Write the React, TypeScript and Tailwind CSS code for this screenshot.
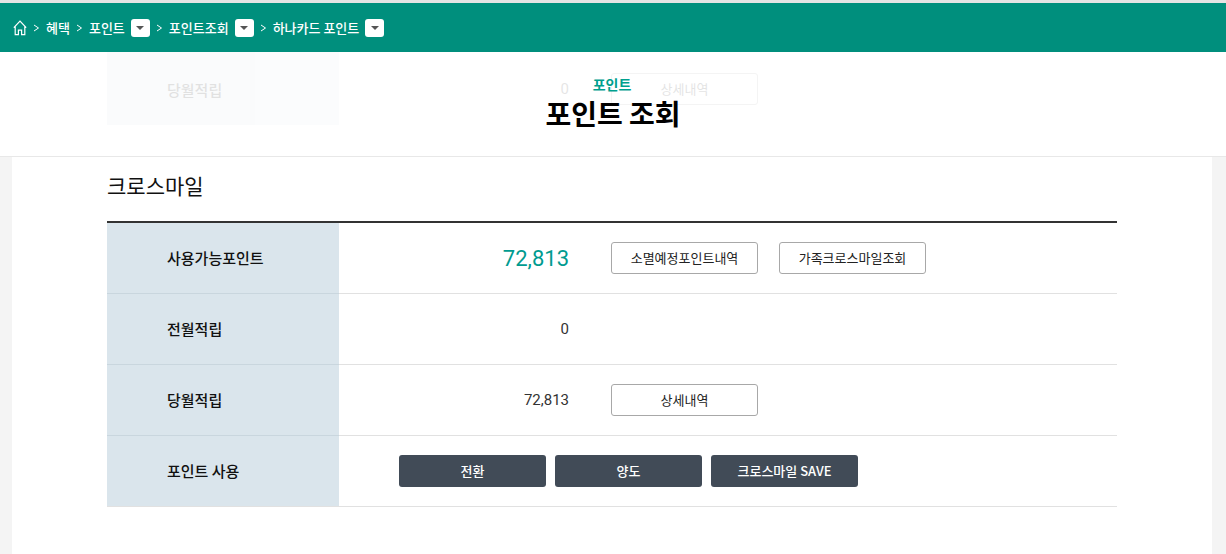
import { Fragment, ReactNode } from "react";

const FONT = "font-['Noto_Sans_CJK_KR','Noto_Sans',sans-serif]";
const NUM = "font-['Roboto','Noto_Sans_CJK_KR',sans-serif]";

const crumbs = [
  { label: "혜택", select: false },
  { label: "포인트", select: true },
  { label: "포인트조회", select: true },
  { label: "하나카드 포인트", select: true },
];

function HomeIcon() {
  return (
    <svg width="14" height="16" viewBox="0 0 14 16" fill="none" stroke="white" strokeWidth="1.2">
      <path d="M0.8 7.6 7 1.2l6.2 6.4M2.2 6.6v8h3.2v-4.4h3.2v4.4h3.2v-8" />
    </svg>
  );
}

function Chevron() {
  return (
    <svg width="7" height="8" viewBox="0 0 7 8" fill="none" stroke="white" strokeWidth="1">
      <path d="M1 1l4.5 3L1 7" />
    </svg>
  );
}

function SelectBox() {
  return (
    <span className="ml-[6px] flex h-[18px] w-[19px] items-center justify-center rounded-[3px] bg-white">
      <span className="h-0 w-0 border-x-[4px] border-t-[4px] border-x-transparent border-t-[#555]" />
    </span>
  );
}

function Row({ label, children, last }: { label: string; children: ReactNode; last?: boolean }) {
  return (
    <div className="flex h-[71px] border-b border-[#e1e1e1]">
      <div className={`flex w-[232px] items-center bg-[#dae5ec] pl-[60px] pt-px text-[15px] font-medium text-[#111] ${last ? "" : "border-b border-[#c9d6de] -mb-px"}`}>
        {label}
      </div>
      <div className="flex flex-1 items-center">{children}</div>
    </div>
  );
}

function Amount({ children, big }: { children: ReactNode; big?: boolean }) {
  return (
    <div className={`w-[230px] text-right ${NUM} ${big ? "text-[22px] text-[#009b90]" : "text-[15px] text-[#333]"}`}>
      {children}
    </div>
  );
}

function OutlineBtn({ children }: { children: ReactNode }) {
  return (
    <button className="flex h-[32px] w-[147px] items-center justify-center rounded-[3px] border border-[#a8a8a8] bg-white text-[13px] text-[#222]">
      {children}
    </button>
  );
}

function DarkBtn({ children }: { children: ReactNode }) {
  return (
    <button className="flex h-[32px] w-[147px] items-center justify-center rounded-[3px] bg-[#414b57] text-[13px] font-medium text-white">
      {children}
    </button>
  );
}

export default function App() {
  return (
    <div className={`h-[554px] w-[1226px] overflow-hidden bg-[#f4f4f4] ${FONT}`}>
      {/* breadcrumb */}
      <div className="h-[3px] bg-[#e4e4e4]" />
      <div className="flex h-[49px] items-center gap-[6px] bg-[#008f7d] pl-[13px] text-[13px] font-medium text-white">
        <HomeIcon />
        {crumbs.map((c) => (
          <Fragment key={c.label}>
            <Chevron />
            <span className="flex items-center">
              {c.label}
              {c.select && <SelectBox />}
            </span>
          </Fragment>
        ))}
      </div>

      {/* sticky title, with the scrolled row fading under it */}
      <div className="relative h-[105px] overflow-hidden border-b border-[#e8e8e8] bg-white">
        <div className="absolute left-[107px] top-0 flex h-[73px] w-[1010px] opacity-[0.12]">
          <div className="flex w-[232px] items-center bg-[#dae5ec] pl-[60px] pt-[3px] text-[15px] font-medium text-[#111]">당월적립</div>
          <div className="flex flex-1 items-center">
            <div className="pt-px">
              <Amount>0</Amount>
            </div>
            <div className="ml-[42px]">
              <OutlineBtn>상세내역</OutlineBtn>
            </div>
          </div>
        </div>
        <div className="relative flex flex-col items-center pt-[21px]">
          <div className="-ml-[2px] text-[14px] leading-[22px] font-bold text-[#00a08e]">포인트</div>
          <h1 className="text-[28px] leading-[36px] font-bold text-black">포인트 조회</h1>
        </div>
      </div>

      {/* content */}
      <div className="ml-[12px] mr-[14px] h-[400px] bg-white px-[95px]">
        <h2 className="pt-[14px] text-[21px] leading-[28px] text-[#111]">크로스마일</h2>
        <div className="mt-[22px] border-t-2 border-[#333]">
          <Row label="사용가능포인트">
            <Amount big>72,813</Amount>
            <div className="ml-[42px] flex gap-[21px]">
              <OutlineBtn>소멸예정포인트내역</OutlineBtn>
              <OutlineBtn>가족크로스마일조회</OutlineBtn>
            </div>
          </Row>
          <Row label="전월적립">
            <Amount>0</Amount>
          </Row>
          <Row label="당월적립">
            <Amount>72,813</Amount>
            <div className="ml-[42px]">
              <OutlineBtn>상세내역</OutlineBtn>
            </div>
          </Row>
          <Row label="포인트 사용" last>
            <div className="ml-[60px] flex gap-[9px]">
              <DarkBtn>전환</DarkBtn>
              <DarkBtn>양도</DarkBtn>
              <DarkBtn>크로스마일 SAVE</DarkBtn>
            </div>
          </Row>
        </div>
      </div>
    </div>
  );
}
